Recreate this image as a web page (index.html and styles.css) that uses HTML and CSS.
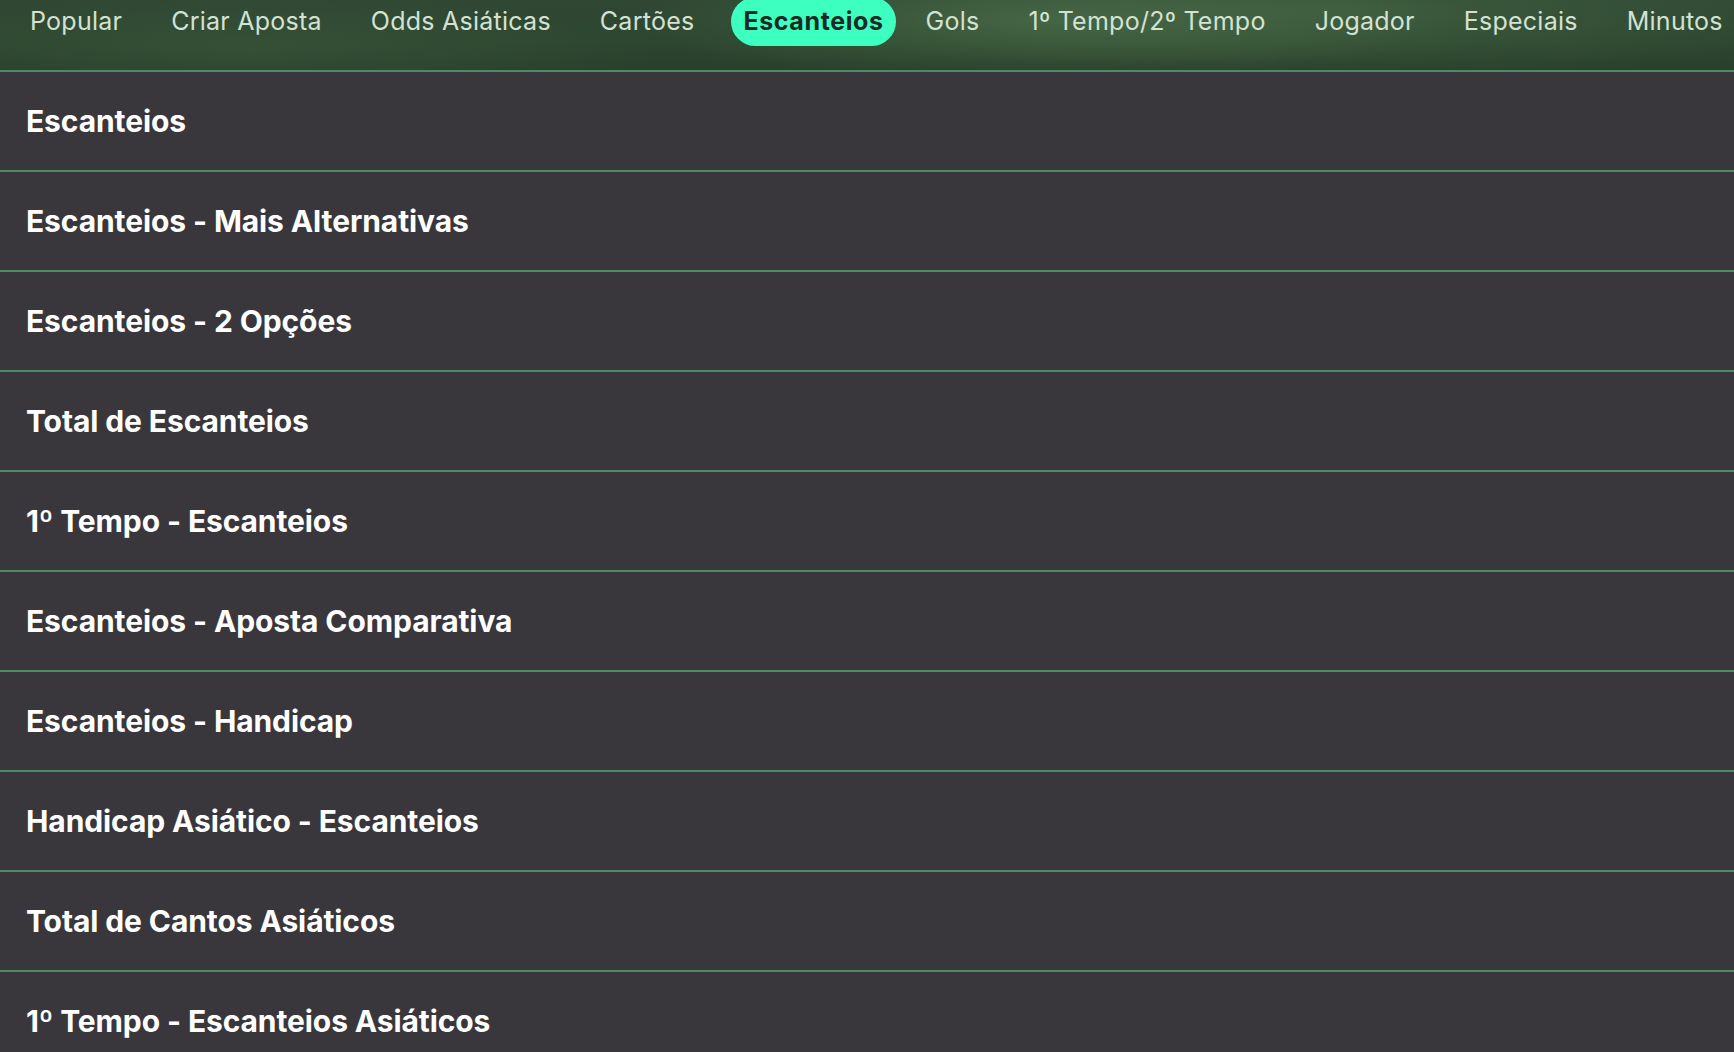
FILE: index.html
```html
<!DOCTYPE html>
<html lang="pt-BR">
<head>
<meta charset="utf-8">
<title>Escanteios</title>
<link rel="stylesheet" href="styles.css">
</head>
<body>
<header class="tabs">
  <nav class="tab-list">
    <span class="tab">Popular</span>
    <span class="tab">Criar Aposta</span>
    <span class="tab">Odds Asiáticas</span>
    <span class="tab">Cartões</span>
    <span class="tab tab-active">Escanteios</span>
    <span class="tab">Gols</span>
    <span class="tab">1º Tempo/2º Tempo</span>
    <span class="tab">Jogador</span>
    <span class="tab">Especiais</span>
    <span class="tab">Minutos</span>
  </nav>
</header>
<main class="markets">
  <div class="market">Escanteios</div>
  <div class="market">Escanteios - Mais Alternativas</div>
  <div class="market">Escanteios - 2 Opções</div>
  <div class="market">Total de Escanteios</div>
  <div class="market">1º Tempo - Escanteios</div>
  <div class="market">Escanteios - Aposta Comparativa</div>
  <div class="market">Escanteios - Handicap</div>
  <div class="market">Handicap Asiático - Escanteios</div>
  <div class="market">Total de Cantos Asiáticos</div>
  <div class="market">1º Tempo - Escanteios Asiáticos</div>
</main>
</body>
</html>
```
FILE: styles.css
```css
html, body {
  margin: 0;
  padding: 0;
  background: #39373c;
  font-family: Inter, "Noto Sans", "Liberation Sans", sans-serif;
  overflow: hidden;
}

.tabs {
  height: 70px;
  border-bottom: 2px solid #4b8c67;
  background:
    radial-gradient(ellipse 420px 60px at 1050px 20px, rgba(90, 130, 85, 0.45), rgba(90, 130, 85, 0) 100%),
    radial-gradient(ellipse 500px 70px at 1350px 10px, rgba(80, 120, 78, 0.4), rgba(80, 120, 78, 0) 100%),
    radial-gradient(ellipse 400px 60px at 250px 50px, rgba(70, 105, 70, 0.3), rgba(70, 105, 70, 0) 100%),
    linear-gradient(180deg, #2f4733 0%, #2d4630 60%, #29402c 100%);
  overflow: hidden;
}

.tab-list {
  display: flex;
  gap: 25px;
  padding-left: 18px;
  margin-top: -3px;
  white-space: nowrap;
}

.tab {
  height: 49px;
  line-height: 49px;
  padding: 0 12px;
  font-size: 25px;
  letter-spacing: 0.25px;
  color: #d3e2d2;
  border-radius: 25px;
}

.tab-active {
  background: #3dffc0;
  color: #1b2a24;
  font-weight: 700;
  letter-spacing: 0.6px;
  margin-right: -7px;
}

.market {
  height: 98px;
  border-bottom: 2px solid #4b8c67;
  display: flex;
  align-items: center;
  padding-left: 26px;
  font-size: 30px;
  font-weight: 700;
  letter-spacing: -0.1px;
  color: #ffffff;
}
```
